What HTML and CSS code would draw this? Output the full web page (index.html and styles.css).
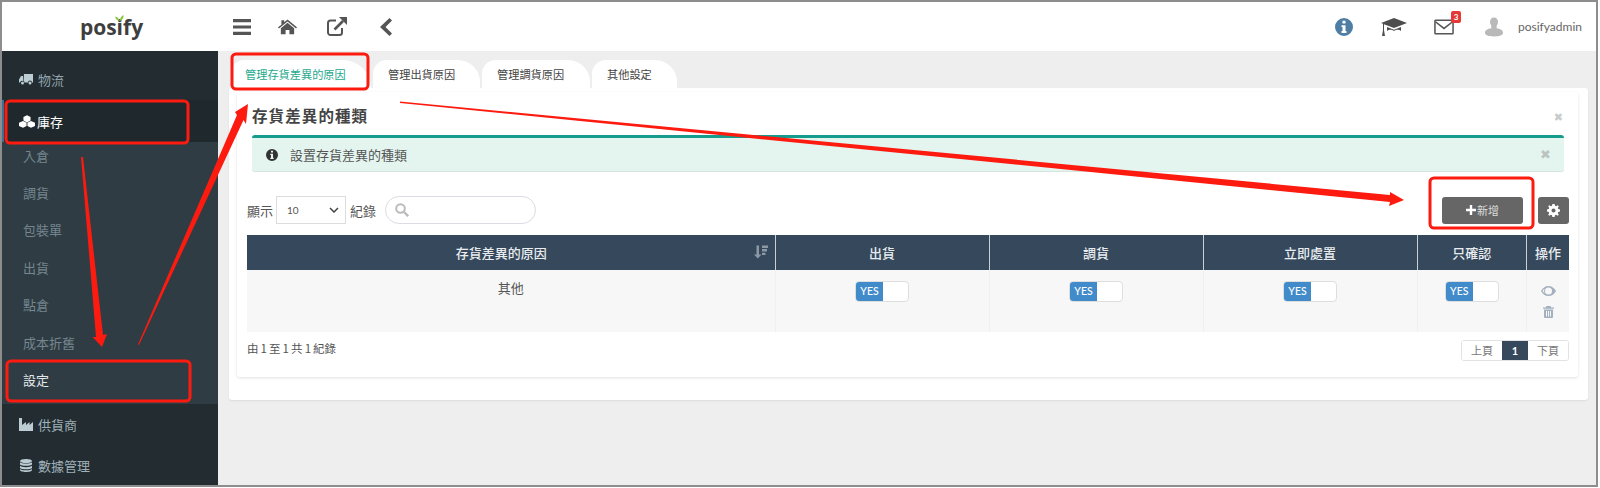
FILE: index.html
```html
<!DOCTYPE html>
<html lang="zh-Hant">
<head>
<meta charset="utf-8">
<title>管理存貨差異的原因</title>
<link rel="stylesheet" href="styles.css">
</head>
<body>
<div class="frame">
  <header class="topbar">
    <div class="brand"><span class="logo">pos<span class="logo-i">i<svg class="leaf" viewBox="0 0 12 7"><path d="M6 7C5 4 3 2 0 2c1 3 3 5 6 5zM6 7c0-3 1-5 4-7 1 3-1 6-4 7z"/></svg></span>fy</span></div>
    <div class="tools">
      <svg class="ic i-bars" viewBox="0 0 18 16"><path d="M0 0h18v3.200H0zM0 6.400h18v3.200H0zM0 12.800h18V16H0z"/></svg>
      <svg class="ic i-home" viewBox="0 0 20 16"><path d="M10 3.500 3 9.200V15a.7.700 0 0 0 .7.700H8v-4.500h4v4.500h4.300A.7.700 0 0 0 17 15V9.200zM20 8.300 10 .2 6.500 3V1H3.600v4.500L0 8.300l1 1.200 9-7.300 9 7.300z"/></svg>
      <svg class="ic i-ext" viewBox="0 0 20 19"><path d="M9 3.500H3.500A2.500 2.500 0 0 0 1 6v9.500A2.500 2.500 0 0 0 3.500 18h9a2.500 2.500 0 0 0 2.500-2.500V11" fill="none" stroke="#555" stroke-width="2"/><path d="M7.500 12.500 16 4" fill="none" stroke="#555" stroke-width="2.600"/><path d="M12 0h8v8z"/></svg>
      <svg class="ic i-back" viewBox="0 0 12 18"><path d="M9.500 0 12 2.500 5.500 9l6.500 6.500L9.500 18 0 9z"/></svg>
    </div>
    <div class="status">
      <svg class="ic i-info" viewBox="0 0 18 18"><path fill-rule="evenodd" d="M9 0a9 9 0 1 1 0 18A9 9 0 0 1 9 0zM7.500 2.800v2.700h3V2.800zM6.500 7.200v1.800H7.500v4H6.500v1.900h5V13h-1V7.200z"/></svg>
      <svg class="ic i-cap" viewBox="0 0 26 18"><path d="M13 0 0 5l2 .8v6.400l-1 5.800h3l-1-5.800V6.200L13 10l13-5z"/><path d="M6 9v4c2-2 5-1.500 7 0 2-1.500 5-2 7 0V9l-7 2.800z"/></svg>
      <span class="mail">
        <svg class="i-mail" viewBox="0 0 21 16"><path d="M1.500 1h18a.5.500 0 0 1 .5.500v13a.5.500 0 0 1-.5.500h-18a.5.500 0 0 1-.5-.5v-13a.5.500 0 0 1 .5-.5z" fill="none" stroke="#555" stroke-width="1.600"/><path d="m1.500 2.500 9 7 9-7" fill="none" stroke="#555" stroke-width="1.600"/></svg>
        <span class="badge">3</span>
      </span>
      <span class="user">
        <svg class="i-user" viewBox="0 0 20 21"><ellipse cx="10" cy="5" rx="4.500" ry="5"/><path d="M7 9h6v3c4 .5 7 2 7 5 0 3-4 4-10 4S0 20 0 17c0-3 3-4.500 7-5z"/></svg>
        <span class="uname">posifyadmin</span>
      </span>
    </div>
  </header>
  <div class="body">
    <nav class="side">
      <a class="nav nav-first"><svg class="nav-ic" viewBox="0 0 14 11"><path d="M5 0h9v8.500h-1a2 2 0 0 0-4 0H5.500a2 2 0 0 0-1-1.500zM4 2v5a2 2 0 0 0-3 1.500H0V5.500L2 2zM3.500 7.500a1.500 1.500 0 1 1 0 3 1.500 1.500 0 0 1 0-3zM11 7.500a1.500 1.500 0 1 1 0 3 1.500 1.500 0 0 1 0-3z"/></svg>物流</a>
      <a class="nav nav-on"><svg class="nav-ic nav-cubes" viewBox="0 0 18 14"><path d="M9 0l4 2v4L9 8 5 6V2zM4.500 6.500l4 2v3.500l-4 2-4.500-2V8.500zM13.500 6.500l4.500 2V12l-4.500 2-4-2V8.500z"/></svg>庫存</a>
      <div class="subs">
        <a class="sub">入倉</a>
        <a class="sub">調貨</a>
        <a class="sub">包裝單</a>
        <a class="sub">出貨</a>
        <a class="sub">點倉</a>
        <a class="sub">成本折舊</a>
        <a class="sub sub-on">設定</a>
      </div>
      <a class="nav"><svg class="nav-ic" viewBox="0 0 14 13"><path d="M0 0h3v7l4-3v3l3.500-3v3L14 4v9H0z"/></svg>供貨商</a>
      <a class="nav"><svg class="nav-ic" viewBox="0 0 12 13"><ellipse cx="6" cy="2" rx="6" ry="2"/><path d="M0 3.200C1 5 11 5 12 3.200V5.500C11 7.300 1 7.300 0 5.500zM0 6.800c1 1.800 11 1.800 12 0V9c-1 1.800-11 1.800-12 0zM0 10c1 1.800 11 1.800 12 0v1c0 2.600-12 2.600-12 0z"/></svg>數據管理</a>
    </nav>
    <main class="main">
      <div class="tabs">
        <a class="tab tab-on">管理存貨差異的原因</a>
        <a class="tab">管理出貨原因</a>
        <a class="tab">管理調貨原因</a>
        <a class="tab">其他設定</a>
      </div>
      <section class="outer">
        <div class="card">
          <div class="card-head"><h2 class="title">存貨差異的種類</h2><span class="x x-head">✖</span></div>
          <div class="alert">
            <svg class="i-note" viewBox="0 0 12 12"><path fill-rule="evenodd" d="M6 0a6 6 0 1 1 0 12A6 6 0 0 1 6 0zM5 1.800v1.800h2V1.800zM4.300 4.800V6H5v2.700h-.7V10h3.400V8.700H7V4.800z"/></svg>
            <span class="alert-text">設置存貨差異的種類</span>
            <span class="x x-alert">✖</span>
          </div>
          <div class="controls">
            <div class="len">
              <span>顯示</span>
              <span class="select">10<svg class="chev" viewBox="0 0 10 6"><path d="M1 1l4 4 4-4" fill="none" stroke="#444" stroke-width="1.500"/></svg></span>
              <span>紀錄</span>
              <span class="search"><svg class="i-search" viewBox="0 0 14 14"><circle cx="5.500" cy="5.500" r="4.300" fill="none" stroke="#bbb" stroke-width="2"/><path d="m9 9 4.200 4.200" stroke="#bbb" stroke-width="2.400"/></svg></span>
            </div>
            <div class="acts">
              <a class="btn btn-add"><svg class="i-plus" viewBox="0 0 10 10"><path d="M3.800 0h2.400v3.800H10v2.400H6.200V10H3.800V6.200H0V3.800h3.800z"/></svg>新增</a>
              <a class="btn btn-gear"><svg class="i-gear" viewBox="0 0 14 14"><path fill-rule="evenodd" d="M5.800 0h2.400l.4 1.900 1.200.5L11.500 1.300 12.700 2.500 11.600 4.200l.5 1.200L14 5.800v2.400l-1.900.4-.5 1.200 1.100 1.700-1.200 1.200-1.700-1.100-1.200.5L8.200 14H5.800l-.4-1.900-1.200-.5-1.700 1.100-1.200-1.200 1.100-1.700-.5-1.200L0 8.200V5.800l1.900-.4.500-1.200L1.300 2.500 2.500 1.300l1.700 1.100 1.200-.5zM7 4.800a2.200 2.200 0 1 0 0 4.400 2.200 2.200 0 0 0 0-4.400z"/></svg></a>
            </div>
          </div>
          <table class="grid">
            <colgroup>
              <col class="c-main"><col class="c-std"><col class="c-std"><col class="c-std"><col class="c-mid"><col class="c-op">
            </colgroup>
            <thead>
              <tr>
                <th class="th-sort">存貨差異的原因<svg class="i-sort" viewBox="0 0 14 13"><path d="M2.500 0h2.500v9H7.500l-3.700 4L0 9h2.500zM8 0h6v2.500H8zM8 3.600h5v2.400H8zM8 7.200h3.500v2.400H8z"/></svg></th>
                <th>出貨</th><th>調貨</th><th>立即處置</th><th>只確認</th><th>操作</th>
              </tr>
            </thead>
            <tbody>
              <tr>
                <td>其他</td>
                <td><span class="toggle"><span class="yes">YES</span></span></td>
                <td><span class="toggle"><span class="yes">YES</span></span></td>
                <td><span class="toggle"><span class="yes">YES</span></span></td>
                <td><span class="toggle"><span class="yes">YES</span></span></td>
                <td class="td-op">
                  <svg class="i-eye" viewBox="0 0 15 10"><path fill-rule="evenodd" d="M7.500 0c3.200 0 6 2 7.500 5-1.500 3-4.300 5-7.500 5S1.500 8 0 5c1.500-3 4.300-5 7.500-5zm0 1.500a3.500 3.500 0 1 0 0 7 3.500 3.500 0 0 0 0-7zM1.500 5c.6 1 1.300 1.800 2.200 2.400A4.500 4.500 0 0 1 3.700 2.600C2.900 3.200 2.100 4 1.500 5z"/></svg>
                  <svg class="i-trash" viewBox="0 0 11 12"><path fill-rule="evenodd" d="M3.500 0h4l.8 1.500H11v1.300H0V1.500h2.700zM1 3.500h9V11a1 1 0 0 1-1 1H2a1 1 0 0 1-1-1zM3 5v5.500h1V5zM5 5v5.500h1V5zM7 5v5.500h1V5z"/></svg>
                </td>
              </tr>
            </tbody>
          </table>
          <div class="foot">
            <span class="info">由 1 至 1 共 1 紀錄</span>
            <div class="pager"><a class="pg">上頁</a><a class="pg pg-on">1</a><a class="pg">下頁</a></div>
          </div>
        </div>
      </section>
    </main>
  </div>
  <svg class="marks" viewBox="0 0 1600 488" fill="#fd1b10">
    <g fill="none" stroke="#fd1b10" stroke-width="3">
      <rect x="232" y="54" width="136" height="35" rx="4"/>
      <rect x="6" y="101" width="182" height="42" rx="4"/>
      <rect x="7" y="361" width="183" height="40" rx="4"/>
      <rect x="1430" y="178" width="103" height="50" rx="4"/>
    </g>
    <path d="M81 157h2L103 335l4-1-5 13-9.500-10H96z"/>
    <path d="M139 345l-1-.5L237 115l-2-3 13-8-2 20-2.500-4z"/>
    <path d="M400 101.500 1390 195v-3l14 8-15 6 1-4L400 103z"/>
  </svg>
</div>
</body>
</html>
```
FILE: styles.css
```css
* { box-sizing: border-box; }
html, body { margin: 0; height: 488px; overflow: hidden; background: #fff; }
body { font-family: "Noto Sans CJK TC", "Open Sans", sans-serif; font-size: 13px; color: #555; }
a { text-decoration: none; color: inherit; }

.frame { position: relative; width: 1598px; height: 487px; border: 2px solid #8d8d8d; display: flex; flex-direction: column; overflow: hidden; }
.marks { position: absolute; left: -2px; top: -2px; width: 1600px; height: 488px; pointer-events: none; }

.topbar { height: 49px; flex: none; background: #fff; display: flex; align-items: center; }
.brand { width: 216px; flex: none; display: flex; justify-content: center; padding-left: 3px; }
.logo { font-family: "Open Sans", sans-serif; font-weight: 700; font-size: 21px; color: #3e3e3e; line-height: 28px; }
.logo-i { position: relative; }
.leaf { position: absolute; left: -2px; top: 2px; width: 10px; height: 6px; fill: #8cc63f; }
.tools { display: flex; align-items: center; flex: 1; padding-left: 15px; }
.ic { fill: #555; display: block; flex: none; }
.i-bars { width: 18px; height: 16px; }
.i-home { width: 19px; height: 16px; margin-left: 27px; }
.i-ext { width: 20px; height: 19px; margin-left: 30px; }
.i-back { width: 12px; height: 18px; margin-left: 33px; }
.status { display: flex; align-items: center; padding-right: 14px; }
.i-info { width: 18px; height: 18px; fill: #4f7ea5; }
.i-cap { width: 26px; height: 18px; margin-left: 28px; fill: #4d4d4d; }
.mail { position: relative; margin-left: 27px; display: block; width: 20px; height: 16px; }
.i-mail { width: 20px; height: 16px; display: block; }
.badge { position: absolute; right: -7px; top: -8px; width: 10px; height: 12px; background: #e53935; color: #fff; font: 700 8px/12px "Lato", sans-serif; text-align: center; border-radius: 2px; }
.user { display: flex; align-items: center; margin-left: 31px; }
.i-user { width: 18px; height: 20px; fill: #b9b9b9; }
.uname { font-family: "Lato", sans-serif; font-size: 12px; margin-left: 15px; color: #666; }

.body { display: flex; flex: 1; min-height: 0; }
.side { width: 216px; flex: none; background: #222c31; color: #9fb0b8; display: flex; flex-direction: column; }
.nav { height: 41px; display: flex; align-items: center; padding-left: 17px; flex: none; }
.nav-first { height: 49px; padding-top: 7px; color: #93a4ac; }
.nav-on { height: 42px; background: #1f292d; color: #fff; border-left: 2px solid #3d6f99; padding-left: 15px; }
.nav-ic { width: 14px; height: 13px; fill: #bcccd3; margin-right: 5px; flex: none; }
.nav-cubes { width: 16px; height: 13px; fill: #fff; margin-right: 2px; }
.subs { background: #2f3c43; display: flex; flex-direction: column; flex: none; }
.sub { height: 37.400px; display: flex; align-items: center; padding: 0 0 11px 21px; color: #74868f; }
.sub-on { color: #e4e8ea; }

.main { flex: 1; min-width: 0; background: #eee; padding: 9px 9px 0 11px; display: flex; flex-direction: column; }
.tabs { display: flex; height: 28px; flex: none; padding-left: 2px; }
.tab { height: 28px; background: #fff; border-radius: 14px 22px 0 0; font-size: 11.200px; line-height: 28px; color: #444; margin-right: 2px; padding: 0 0 0 15px; white-space: nowrap; }
.tab-on { color: #1ea98d; width: 140px; padding-left: 14px; border-radius: 14px 30px 0 0; }
.tab:nth-child(2) { width: 107px; }
.tab:nth-child(3) { width: 108px; }
.tab:nth-child(4) { width: 85px; }

.outer { background: #fff; width: 1359px; height: 312px; flex: none; border-radius: 3px; padding: 4px 10px 0 8px; box-shadow: 0 1px 2px rgba(0,0,0,.08); }
.card { background: #fff; height: 285px; border-radius: 3px; box-shadow: 0 1px 3px rgba(0,0,0,.12); padding: 0 9px 0 10px; }
.card-head { height: 43px; display: flex; align-items: center; justify-content: space-between; padding: 3px 0 0 5px; }
.title { margin: 0; font-size: 15.500px; font-weight: 700; color: #444; letter-spacing: 1.100px; }
.x { color: #c6cbcb; font-family: "DejaVu Sans", sans-serif; }
.x-head { font-size: 11px; margin-right: 6px; padding-top: 4px; }
.alert { margin: 0 5px 0 5px; height: 37px; background: #e4f5ef; border-top: 3px solid #169c8c; border-bottom: 1px solid #d4e4de; border-radius: 3px; display: flex; align-items: center; padding: 0 13px 0 14px; }
.i-note { width: 12px; height: 12px; fill: #333; flex: none; }
.alert-text { margin-left: 12px; flex: 1; }
.x-alert { font-size: 13px; color: #bcc4c2; }

.controls { height: 28px; margin-top: 24px; display: flex; justify-content: space-between; align-items: center; }
.len { display: flex; align-items: center; }
.select { width: 70px; height: 28px; margin: 0 4px 0 3px; border: 1px solid #dcdcdc; padding: 0 6px 0 10px; display: flex; align-items: center; justify-content: space-between; font-family: "Lato", sans-serif; font-size: 10px; }
.chev { width: 10px; height: 6px; }
.search { width: 151px; height: 28px; margin-left: 9px; border: 1px solid #dcdce4; border-radius: 14px; display: flex; align-items: center; padding-left: 9px; }
.i-search { width: 14px; height: 14px; }
.acts { display: flex; align-items: center; gap: 15px; }
.btn { height: 27px; background: #666; color: #ddd; border-radius: 3px; display: flex; align-items: center; justify-content: center; font-size: 11px; }
.btn-add { width: 81px; }
.btn-gear { width: 31px; }
.i-plus { width: 10px; height: 10px; fill: #fff; margin-right: 1px; }
.i-gear { width: 13px; height: 13px; fill: #fff; }

.grid { width: 1322px; table-layout: fixed; border-collapse: collapse; margin-top: 11px; }
.c-main { width: 528px; } .c-std { width: 214px; } .c-mid { width: 109.500px; } .c-op { width: 42.500px; }
.grid th { height: 35px; background: #36495c; color: #e9edf0; font-weight: 500; font-size: 13px; border-left: 1px solid #c8d0d6; padding: 0; }
.grid th:first-child { border-left: 0; }
.th-sort { position: relative; padding-right: 19px !important; }
.i-sort { position: absolute; right: 7px; top: 10px; width: 14px; height: 14px; fill: #8c98a3; }
.grid td { height: 62px; background: #f7f7f7; text-align: center; vertical-align: top; padding: 9px 0 0; border-left: 1px solid #f0f0f0; line-height: 18px; }
.grid td:first-child { border-left: 0; }
.toggle { display: inline-block; width: 54px; height: 21px; margin-top: 2px; background: #fff; border: 1px solid #dedede; border-radius: 4px; overflow: hidden; text-align: left; vertical-align: top; }
.yes { display: block; width: 27px; height: 19px; background: #428bca; color: #fff; font: 500 10.500px/19px "Lato", sans-serif; text-align: center; }
.td-op svg { display: block; margin: 0 auto; }
.i-eye { width: 15px; height: 10px; margin-top: 7px !important; fill: #a3b0bd; }
.i-trash { width: 11px; height: 12px; margin-top: 10px !important; fill: #a3b0bd; }

.foot { display: flex; justify-content: space-between; margin-top: 8px; width: 1322px; }
.info { font-size: 11.500px; line-height: 16px; word-spacing: -.5px; }
.pager { display: flex; height: 21px; border: 1px solid #e2e2e2; border-radius: 3px; overflow: hidden; }
.pg { width: 40px; text-align: center; font-size: 11px; line-height: 19px; color: #777; background: #fff; }
.pg-on { width: 26px; background: #36495c; color: #fff; font-family: "Lato", sans-serif; font-weight: 700; }
```
